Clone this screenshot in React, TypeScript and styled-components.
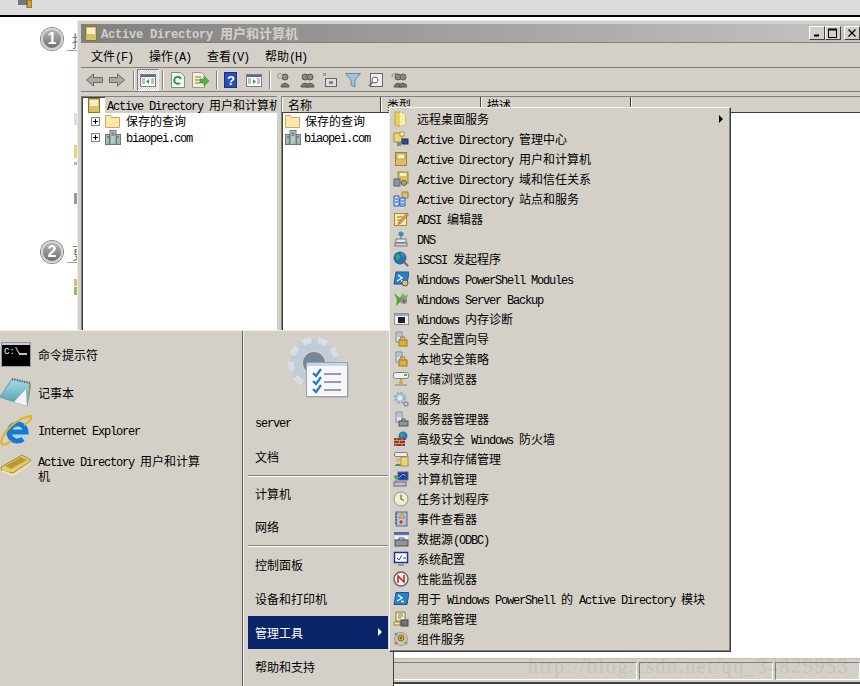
import React from 'react'
import type { FC, ReactNode } from 'react'
import styled, { createGlobalStyle } from 'styled-components'

const GlobalStyle = createGlobalStyle`
  html, body { margin: 0; padding: 0; background: #fff; }
  body { font-family: "Noto Sans CJK SC", "Liberation Sans", sans-serif; font-size: 12px; color: #000; }
`

const Latin = styled.span<{ $bold?: boolean }>`
  font-family: "Liberation Mono", monospace;
  font-size: 12px;
  line-height: 1;
  letter-spacing: ${({ $bold }) => ($bold ? '-0.2px' : '-1.2px')};
`

// SimSun runs its latin at half the CJK width, so split the runs and style them apart
const Txt: FC<{ s: string; bold?: boolean }> = ({ s, bold }) => (
  <>
    {s.split(/([\x00-\x7f]+)/).filter(Boolean).map((run, i) =>
      /^[\x00-\x7f]/.test(run) ? <Latin key={i} $bold={bold}>{run}</Latin> : <span key={i}>{run}</span>
    )}
  </>
)

const Svg: FC<{ w?: number; h?: number; vb?: string; children: ReactNode }> = ({ w = 16, h = 16, vb, children }) => (
  <svg width={w} height={h} viewBox={vb ?? `0 0 ${w} ${h}`} style={{ display: 'block', flexShrink: 0 }}>
    {children}
  </svg>
)

const ServerLock = (
  <Svg>
    <path d="M3 1h6v10H3z" fill="#dfe3e8" stroke="#7d8792" />
    <path d="M4 3h4M4 5h4" stroke="#8e99a5" />
    <path d="M7 9.500V8a2.500 2.500 0 015 0v1.500" fill="none" stroke="#9a7a20" />
    <rect x="6" y="9" width="8" height="6" fill="#e0b030" stroke="#9a7a20" />
  </Svg>
)

const BookTan = (
  <>
    <rect x="2.500" y="1.500" width="11" height="13" fill="#d8bf68" stroke="#9c8432" />
    <rect x="4" y="3" width="8" height="5" fill="#f6efc8" stroke="#b9a24e" />
  </>
)

const menuIcons: Record<string, ReactNode> = {
  remote: (
    <Svg>
      <path d="M2 1h5l5 2v11l-5 1H2z" fill="#eccf63" stroke="#c4a93f" />
      <path d="M7 1l5 2v11l-5 1z" fill="#f7eda8" />
    </Svg>
  ),
  adCenter: (
    <Svg>
      <path d="M1 2h8v9H1z" fill="#ecd67c" stroke="#a89040" />
      <path d="M7 1h4v4H7z" fill="#fff5c0" stroke="#a89040" />
      <rect x="9" y="8" width="6" height="5" fill="#1c4fb0" stroke="#333" />
      <rect x="4" y="11" width="4" height="4" fill="#7f8a96" />
    </Svg>
  ),
  adUsers: <Svg>{BookTan}</Svg>,
  adDomains: (
    <Svg>
      <rect x="5" y="1" width="10" height="11" fill="#d8bf68" stroke="#9c8432" />
      <rect x="7" y="2" width="6" height="3" fill="#f6efc8" />
      <rect x="1" y="8" width="6" height="7" fill="#8a97a6" stroke="#566" />
      <circle cx="11" cy="12" r="2.500" fill="#e0a020" stroke="#2a62b0" />
    </Svg>
  ),
  adSites: (
    <Svg>
      <rect x="9" y="1" width="6" height="6" fill="#d8bf68" stroke="#9c8432" />
      <path d="M1 5h5v10H1zM7 7h5v8H7z" fill="#cfe0f5" stroke="#1f5fc0" />
      <path d="M2 8h3M2 11h3M8 10h3M8 13h3" stroke="#1f5fc0" />
    </Svg>
  ),
  adsi: (
    <Svg>
      <rect x="1.500" y="2.500" width="12" height="12" fill="#f6e9b0" stroke="#a58a30" />
      <path d="M4 6h6M4 9h4" stroke="#8a7a40" />
      <path d="M6 11l8-9 1.500 1.500-8 9-2.500 1z" fill="#e8a040" stroke="#844" strokeWidth=".6" />
    </Svg>
  ),
  dns: (
    <Svg>
      <circle cx="8" cy="3" r="2.500" fill="#3a8bd0" />
      <path d="M8 5v5" stroke="#778" />
      <rect x="3" y="8" width="10" height="3.500" fill="#e8e8e8" stroke="#778" />
      <rect x="2" y="12" width="12" height="3" fill="#d0d0d0" stroke="#778" />
    </Svg>
  ),
  iscsi: (
    <Svg>
      <circle cx="7" cy="7" r="6.500" fill="#1f70b8" />
      <path d="M3 4c2-2 4 0 4 2s-3 2-3 4zM8 2c3 0 4 3 3 4s-2-2-3-4z" fill="#52a84a" />
      <path d="M10 10l5 5" stroke="#667" strokeWidth="2" />
    </Svg>
  ),
  psModules: (
    <Svg>
      <path d="M3 1h13l-2 12H1z" fill="#2a7fc8" stroke="#1a5690" />
      <path d="M5 4l4 3-5 3M8 10h3" fill="none" stroke="#fff" strokeWidth="1.300" />
      <circle cx="12" cy="12" r="3" fill="#f0c030" stroke="#2a62b0" />
    </Svg>
  ),
  backup: (
    <Svg>
      <path d="M1 2l3 7-1 6 5-5 2-8-3 5z" fill="#47a83a" />
      <path d="M7 12l3-10 2 3 3-2-2 8z" fill="#6fbe4f" />
      <circle cx="11" cy="10" r="3" fill="#8f8790" />
      <circle cx="11" cy="10" r="1" fill="#c24" />
    </Svg>
  ),
  memory: (
    <Svg>
      <rect x="1.500" y="2.500" width="14" height="11" fill="#eef0f4" stroke="#8a8f99" />
      <rect x="2" y="3" width="13" height="2" fill="#9aa6bb" />
      <rect x="5" y="6" width="7" height="6" fill="#222" />
    </Svg>
  ),
  lockA: ServerLock,
  lockB: ServerLock,
  storage: (
    <Svg>
      <rect x=".5" y="1.500" width="15" height="6" rx="2" fill="#f0f0ee" stroke="#7c8288" />
      <rect x="11" y="3" width="3" height="2" fill="#4caa38" />
      <path d="M8 8v5M2 14h12" stroke="#7c8288" />
      <rect x="6" y="10" width="4" height="3" fill="#d8b030" />
    </Svg>
  ),
  services: (
    <Svg>
      <circle cx="7" cy="7" r="4.500" fill="none" stroke="#8fb0d0" strokeWidth="3" strokeDasharray="2.500 1" />
      <circle cx="7" cy="7" r="2" fill="#e8eef5" />
      <circle cx="13" cy="13" r="2" fill="none" stroke="#8b9198" strokeWidth="1.500" />
    </Svg>
  ),
  serverManager: (
    <Svg>
      <path d="M3 1h6v10H3z" fill="#dfe3e8" stroke="#7d8792" />
      <path d="M4 3h4M4 5h4" stroke="#8e99a5" />
      <rect x="6" y="10" width="9" height="5" fill="#8d949c" stroke="#555" />
      <path d="M9 10V8h3v2" fill="none" stroke="#555" />
    </Svg>
  ),
  firewall: (
    <Svg>
      <circle cx="10" cy="5" r="4.500" fill="#2a78c8" />
      <path d="M8 2c2 0 3 2 2 3l-3 1z" fill="#52a84a" />
      <rect x="1" y="7" width="11" height="8" fill="#8c3a22" />
      <path d="M1 9.500h11M1 12.500h11M4 7v2.500M9 7v2.500M6.500 9.500v3M3 12.500V15M9 12.500V15" stroke="#d8b8a0" strokeWidth=".7" />
    </Svg>
  ),
  shares: (
    <Svg>
      <rect x="1.500" y="1.500" width="13" height="4" rx="1.500" fill="#eee" stroke="#7c8288" />
      <rect x="8" y="6" width="7" height="9" fill="#ecd67c" stroke="#a89040" />
      <circle cx="5" cy="9" r="2" fill="#e8b070" />
      <path d="M2 15c0-3 6-3 6 0z" fill="#3f9a48" />
    </Svg>
  ),
  computer: (
    <Svg>
      <rect x="5" y="1" width="10" height="8" fill="#1a3fb0" stroke="#667" />
      <path d="M6 7l4-4 3 2" stroke="#7fb8ff" fill="none" />
      <rect x="1" y="11" width="12" height="4" fill="#bdc3c9" stroke="#667" />
      <circle cx="3" cy="6" r="2" fill="#4caa38" />
      <path d="M3 8v3" stroke="#667" />
    </Svg>
  ),
  clock: (
    <Svg>
      <circle cx="8" cy="8" r="7" fill="#f4ecd0" stroke="#8a8f99" />
      <path d="M8 3.500V8l3 1.500" fill="none" stroke="#666" strokeWidth="1.200" />
    </Svg>
  ),
  events: (
    <Svg>
      <rect x="3" y="1" width="11" height="14" fill="#a9bfdc" stroke="#55688a" />
      <path d="M2 3h2M2 6h2M2 9h2M2 12h2" stroke="#445" />
      <path d="M9 2l3 5H6z" fill="#f0c020" stroke="#8a6a10" strokeWidth=".5" />
      <circle cx="8" cy="11" r="2.200" fill="#d03030" stroke="#fff" strokeWidth=".6" />
    </Svg>
  ),
  odbc: (
    <Svg>
      <rect x="1" y="1" width="15" height="3" fill="#4a6ea8" />
      <rect x="1" y="4" width="15" height="5" fill="#f0f0f0" stroke="#99a" strokeWidth=".5" />
      <rect x="2" y="9" width="13" height="6" fill="#8d949c" stroke="#555" />
      <path d="M6 9V7h5v2" fill="none" stroke="#555" />
    </Svg>
  ),
  msconfig: (
    <Svg>
      <rect x="1.500" y="1.500" width="13" height="10" fill="#fff" stroke="#1c2fb0" strokeWidth="1.500" />
      <path d="M4 7l2 2 3-5" fill="none" stroke="#1c4fc0" />
      <path d="M10 7h3" stroke="#444" />
      <path d="M5 14h6" stroke="#9a9a9a" strokeWidth="2" />
    </Svg>
  ),
  perf: (
    <Svg>
      <circle cx="8" cy="8" r="7" fill="#f5f1e6" stroke="#5f6368" strokeWidth="1.400" />
      <path d="M5 12V5l6 6V4" fill="none" stroke="#c02020" strokeWidth="1.500" />
    </Svg>
  ),
  ps: (
    <Svg>
      <path d="M3 1.500h13l-2 12H1z" fill="#2a7fc8" stroke="#1a5690" />
      <path d="M5 4l4 3-5 3M8 10.500h3" fill="none" stroke="#fff" strokeWidth="1.300" />
    </Svg>
  ),
  gpo: (
    <Svg>
      <path d="M3 1h9v9H3z" fill="#f6efc8" stroke="#8a7a40" />
      <path d="M5 3h5M5 5h5M5 7h3" stroke="#8a7a40" />
      <path d="M1 11h6v3H1z" fill="#f0e4a8" stroke="#a58a30" />
      <rect x="8" y="9" width="7" height="6" fill="#6f767e" stroke="#444" />
    </Svg>
  ),
  components: (
    <Svg>
      <circle cx="8" cy="8" r="6.500" fill="#c9c6bd" stroke="#9a9a9a" />
      <circle cx="8" cy="7" r="3" fill="#e8c020" stroke="#8a6a10" />
      <path d="M8 5.500v3M6.500 7h3" stroke="#553" />
      <circle cx="3" cy="3" r="1.500" fill="#6a8ad0" />
      <circle cx="3" cy="12" r="1.500" fill="#d06060" />
      <circle cx="13" cy="12" r="1.500" fill="#6ab060" />
    </Svg>
  ),
}

const adminItems: { icon: string; label: string; arrow?: boolean }[] = [
  { icon: 'remote', label: '远程桌面服务', arrow: true },
  { icon: 'adCenter', label: 'Active Directory 管理中心' },
  { icon: 'adUsers', label: 'Active Directory 用户和计算机' },
  { icon: 'adDomains', label: 'Active Directory 域和信任关系' },
  { icon: 'adSites', label: 'Active Directory 站点和服务' },
  { icon: 'adsi', label: 'ADSI 编辑器' },
  { icon: 'dns', label: 'DNS' },
  { icon: 'iscsi', label: 'iSCSI 发起程序' },
  { icon: 'psModules', label: 'Windows PowerShell Modules' },
  { icon: 'backup', label: 'Windows Server Backup' },
  { icon: 'memory', label: 'Windows 内存诊断' },
  { icon: 'lockA', label: '安全配置向导' },
  { icon: 'lockB', label: '本地安全策略' },
  { icon: 'storage', label: '存储浏览器' },
  { icon: 'services', label: '服务' },
  { icon: 'serverManager', label: '服务器管理器' },
  { icon: 'firewall', label: '高级安全 Windows 防火墙' },
  { icon: 'shares', label: '共享和存储管理' },
  { icon: 'computer', label: '计算机管理' },
  { icon: 'clock', label: '任务计划程序' },
  { icon: 'events', label: '事件查看器' },
  { icon: 'odbc', label: '数据源(ODBC)' },
  { icon: 'msconfig', label: '系统配置' },
  { icon: 'perf', label: '性能监视器' },
  { icon: 'ps', label: '用于 Windows PowerShell 的 Active Directory 模块' },
  { icon: 'gpo', label: '组策略管理' },
  { icon: 'components', label: '组件服务' },
]

const Page = styled.div`
  position: relative;
  width: 860px;
  height: 686px;
  overflow: hidden;
  background: #fff;
`

const TopBar = styled.div`
  height: 15px;
  background: #dcdcdc;
  border-bottom: 2px solid #000;
  padding-left: 18px;
  overflow: hidden;
`

const Badge = styled.div<{ $x: number; $y: number }>`
  position: absolute;
  left: ${({ $x }) => $x}px;
  top: ${({ $y }) => $y}px;
  width: 22px;
  height: 22px;
  box-sizing: border-box;
  border-radius: 50%;
  background: linear-gradient(#b4b4b4, #6e6e6e);
  border: 2px solid #d0d0d0;
  box-shadow: 0 0 0 1px #8a8a8a;
  color: #fff;
  font: bold 16px/18px "Liberation Sans", sans-serif;
  text-align: center;
`

const GuideFragment = styled.div<{ $y: number }>`
  position: absolute;
  left: 67px;
  top: ${({ $y }) => $y}px;
  width: 11px;
  height: 20px;
  box-sizing: content-box;
  border-bottom: 1px solid #a0a0a0;
  overflow: hidden;
  padding-left: 5px;
  color: #777;
  font-size: 16px;
  line-height: 20px;
`

const Sliver = styled.div<{ $y: number; $h: number; $c: string }>`
  position: absolute;
  left: 74px;
  top: ${({ $y }) => $y}px;
  width: 4px;
  height: ${({ $h }) => $h}px;
  background: ${({ $c }) => $c};
`

const Window = styled.div`
  position: absolute;
  left: 77px;
  top: 20px;
  width: 783px;
  height: 664px;
  display: flex;
  flex-direction: column;
  box-sizing: border-box;
  padding: 3px 0 0 3px;
  background: #d4d0c8;
  border-top: 1px solid #efece6;
  border-left: 1px solid #efece6;
  border-bottom: 2px solid #404040;
`

const TitleBar = styled.div`
  height: 18px;
  flex: none;
  display: flex;
  align-items: center;
  gap: 4px;
  padding: 0 0 0 4px;
  background: linear-gradient(90deg, #808080, #c4c4c4);
  color: #d4d0c8;
  font-size: 13px;
  font-weight: 700;
  line-height: 18px;
  border-bottom: 1px solid #808080;
`

const TitleText = styled.div`
  flex: 1;
  white-space: nowrap;
`

const CaptionButtons = styled.div`
  display: flex;
`

const CaptionButton = styled.div<{ $gap?: boolean }>`
  width: 14px;
  height: 12px;
  margin-left: ${({ $gap }) => ($gap ? 3 : 0)}px;
  display: flex;
  align-items: center;
  justify-content: center;
  background: #d4d0c8;
  border: 1px solid;
  border-color: #fff #404040 #404040 #fff;
`

const MenuBar = styled.div`
  height: 22px;
  flex: none;
  display: flex;
  align-items: center;
  gap: 16px;
  padding: 2px 0 0 10px;
  line-height: 16px;
  border-bottom: 1px solid #808080;
`

const Toolbar = styled.div`
  height: 22px;
  flex: none;
  display: flex;
  align-items: center;
  padding-left: 5px;
  margin-top: 1px;
  border-bottom: 1px solid #808080;
`

const ToolButton = styled.div<{ $ml: number }>`
  margin-left: ${({ $ml }) => $ml}px;
`

const ToolSep = styled.div<{ $ml: number }>`
  width: 1px;
  height: 18px;
  margin-left: ${({ $ml }) => $ml}px;
  background: #808080;
  box-shadow: 1px 0 0 #fff;
`

const ToolActive = styled.div`
  width: 20px;
  height: 20px;
  margin-left: 3px;
  display: flex;
  align-items: center;
  justify-content: center;
  border: 1px solid;
  border-color: #808080 #fff #fff #808080;
  background: repeating-conic-gradient(#fff 0 25%, #d4d0c8 0 50%) 0 0 / 2px 2px;
`

const Panes = styled.div`
  flex: 1;
  min-height: 0;
  display: flex;
  margin-top: 4px;
  gap: 4px;
`

const TreePane = styled.div`
  width: 194px;
  flex: none;
  background: #fff;
  border-left: 1px solid #808080;
  border-top: 1px solid #808080;
  box-shadow: inset 1px 1px 0 #404040;
  overflow: hidden;
  padding-left: 1px;
`

const TreeRoot = styled.div`
  display: flex;
  height: 16px;
  align-items: center;
  white-space: nowrap;
  line-height: 16px;
  padding-left: 5px;
  gap: 5px;
`

const TreeRootLabel = styled.span`
  background: #d4d0c8;
  flex: 1;
  height: 16px;
  padding-left: 2px;
  overflow: hidden;
`

const TreeRow = styled.div`
  display: flex;
  align-items: center;
  height: 16px;
  gap: 5px;
  padding-left: 8px;
  white-space: nowrap;
  line-height: 16px;
`

const Expander = styled.div`
  width: 7px;
  height: 7px;
  flex: none;
  border: 1px solid #808080;
  position: relative;
  &::before { content: ""; position: absolute; left: 1px; right: 1px; top: 3px; height: 1px; background: #000; }
  &::after { content: ""; position: absolute; top: 1px; bottom: 1px; left: 3px; width: 1px; background: #000; }
`

const ListPane = styled.div`
  flex: 1;
  min-width: 0;
  display: flex;
  flex-direction: column;
  background: #fff;
  border-left: 1px solid #808080;
  border-top: 1px solid #808080;
  box-shadow: inset 1px 1px 0 #404040;
`

const ListHeader = styled.div`
  display: flex;
  height: 16px;
  flex: none;
  box-sizing: border-box;
  background: #d4d0c8;
  border-bottom: 1px solid #404040;
`

const HeaderCell = styled.div<{ $w?: number }>`
  width: ${({ $w }) => ($w ? `${$w}px` : 'auto')};
  flex: ${({ $w }) => ($w ? 'none' : '1')};
  box-sizing: border-box;
  padding-left: 5px;
  line-height: 16px;
  border-right: ${({ $w }) => ($w ? '1px solid #404040' : '0')};
  border-left: 1px solid #fff;
  height: 15px;
  overflow: hidden;
`

const ListBody = styled.div`
  flex: 1;
`

const ListRow = styled.div`
  display: flex;
  align-items: center;
  height: 16px;
  padding-left: 3px;
  gap: 2px;
  line-height: 16px;
  white-space: nowrap;
`

const StatusBar = styled.div`
  height: 24px;
  flex: none;
  box-sizing: border-box;
  display: flex;
  gap: 2px;
  padding: 3px 0 2px 0;
  border-top: 1px solid #c4c0b8;
  background: #d4d0c8;
`

const StatusCell = styled.div<{ $w?: number }>`
  width: ${({ $w }) => ($w ? `${$w}px` : 'auto')};
  flex: ${({ $w }) => ($w ? 'none' : '1')};
  border: 1px solid;
  border-color: #808080 #fff #fff #808080;
`

const Watermark = styled.div`
  position: absolute;
  left: 528px;
  top: 656px;
  font: 20px/20px "Liberation Serif", serif;
  letter-spacing: 1.6px;
  color: rgba(120, 120, 120, 0.17);
  white-space: nowrap;
`

const StartMenu = styled.div`
  position: absolute;
  left: 0;
  top: 330px;
  width: 394px;
  height: 356px;
  box-sizing: border-box;
  display: flex;
  background: #d4d0c8;
  border-top: 1px solid #efece6;
  border-right: 1px solid #404040;
`

const Programs = styled.div`
  width: 243px;
  flex: none;
  box-sizing: border-box;
  padding-top: 4px;
  border-right: 1px solid #606060;
`

const ProgramRow = styled.div`
  display: flex;
  align-items: center;
  height: 38px;
  gap: 7px;
`

const ProgramIcon = styled.div<{ $lift?: number }>`
  width: 31px;
  flex: none;
  display: flex;
  justify-content: center;
  padding-bottom: ${({ $lift }) => $lift ?? 0}px;
`

const ProgramLabel = styled.div`
  width: 166px;
  line-height: 13px;
`

const Places = styled.div`
  flex: 1;
  min-width: 0;
  display: flex;
  flex-direction: column;
  padding-left: 4px;
  border-left: 1px solid #f0eee8;
`

const GearBox = styled.div`
  height: 76px;
  flex: none;
  padding: 3px 0 0 40px;
  box-sizing: border-box;
`

const Place = styled.div<{ $active?: boolean }>`
  height: 33px;
  flex: none;
  width: 140px;
  box-sizing: border-box;
  position: relative;
  display: flex;
  align-items: center;
  padding-left: 7px;
  line-height: 16px;
  background: ${({ $active }) => ($active ? '#0a246a' : 'transparent')};
  color: ${({ $active }) => ($active ? '#fff' : '#000')};
`

const PlaceArrow = styled.span`
  position: absolute;
  right: 6px;
  top: 12px;
  border-left: 4px solid #fff;
  border-top: 4px solid transparent;
  border-bottom: 4px solid transparent;
`

const PlaceRule = styled.div<{ $h?: number; $blank?: boolean }>`
  height: ${({ $h }) => $h ?? 5}px;
  width: 140px;
  flex: none;
  display: flex;
  align-items: center;
  &::after {
    content: "";
    flex: 1;
    height: 1px;
    background: ${({ $blank }) => ($blank ? 'transparent' : '#808080')};
    box-shadow: ${({ $blank }) => ($blank ? 'none' : '0 1px 0 #fff')};
  }
`

const Flyout = styled.div`
  position: absolute;
  left: 389px;
  top: 107px;
  width: 342px;
  height: 545px;
  box-sizing: border-box;
  padding: 1px 0 0 0;
  background: #d4d0c8;
  border: 1px solid;
  border-color: #f4f2ec #404040 #404040 #f4f2ec;
  box-shadow: inset -1px -1px 0 #808080;
`

const FlyoutRow = styled.div`
  display: flex;
  align-items: center;
  height: 20px;
  padding-left: 3px;
  gap: 8px;
  line-height: 16px;
  white-space: nowrap;
  position: relative;
`

const FlyoutArrow = styled.span`
  position: absolute;
  right: 7px;
  top: 6px;
  border-left: 4px solid #000;
  border-top: 4px solid transparent;
  border-bottom: 4px solid transparent;
`

const SavedFolder = (
  <Svg w={15} h={14}>
    <path d="M.5 3.500V1.500h5l1 2h8v10H.5z" fill="#fbe8a8" stroke="#c8aa58" />
  </Svg>
)

const Domain = (
  <Svg w={16} h={15}>
    <rect x="5" y=".5" width="6" height="14" fill="#bcc7c6" stroke="#6a7a7a" />
    <rect x=".5" y="4.500" width="4" height="10" fill="#aab8b8" stroke="#6a7a7a" />
    <rect x="11.500" y="4.500" width="4" height="10" fill="#aab8b8" stroke="#6a7a7a" />
    <path d="M6.500 3h3M6.500 5h3M2 7h2M12 7h2" stroke="#556" />
    <path d="M3 13h1M8 13h1M13 13h1" stroke="#4fd04f" strokeWidth="1.500" />
  </Svg>
)

const ArrowLeft = (
  <Svg w={17} h={14}>
    <path d="M.5 7l7-6v3.500h9v5h-9V13z" fill="#a8a8a8" stroke="#6a6a6a" />
  </Svg>
)
const ArrowRight = (
  <Svg w={16} h={14}>
    <path d="M15.500 7l-7-6v3.500h-8v5h8V13z" fill="#a8a8a8" stroke="#6a6a6a" />
  </Svg>
)
const PaneIcon: FC<{ arrow: string; flip?: boolean }> = ({ arrow, flip }) => (
  <Svg w={16} h={13}>
    <rect x=".5" y=".5" width="15" height="12" fill="#fff" stroke="#7a8088" />
    <rect x="1" y="1" width="14" height="2" fill="#5a6a80" />
    <path d="M2 5h3M2 7h3M2 9h3M11 5h3M11 7h3M11 9h3" stroke="#7a8088" />
    <path d={flip ? 'M7 5v5l3-2.500z' : 'M9 5v5L6 7.500z'} fill={arrow} />
  </Svg>
)
const Person: FC<{ x?: number }> = ({ x = 0 }) => (
  <g transform={`translate(${x} 0)`}>
    <circle cx="6" cy="5" r="3" fill="#8a8a8a" stroke="#555" />
    <path d="M2 15c0-5 8-5 8 0z" fill="#777" stroke="#555" />
  </g>
)

const AdTitleIcon = (
  <Svg w={12} h={15}>
    <rect x=".5" y=".5" width="11" height="14" fill="#d8bf68" stroke="#8e7828" />
    <rect x="2" y="2" width="8" height="6" fill="#f6efc8" />
  </Svg>
)

const CmdIcon = (
  <Svg w={30} h={25}>
    <rect x=".5" y=".5" width="29" height="24" fill="#000" stroke="#999" />
    <rect x="1" y="1" width="28" height="2" fill="#c8ccd4" />
    <text x="3" y="12" fill="#fff" fontFamily="Liberation Mono" fontSize="9">C:\</text>
    <path d="M18 12h8" stroke="#fff" strokeWidth="1.500" />
  </Svg>
)

const NotepadIcon = (
  <Svg w={31} h={30}>
    <defs>
      <linearGradient id="notepadPage" x1="0" y1="0" x2="0" y2="1">
        <stop offset="0" stopColor="#a8dce2" />
        <stop offset="1" stopColor="#4a9db4" />
      </linearGradient>
    </defs>
    <path d="M12 2l18 4-3 23L0 20z" fill="url(#notepadPage)" stroke="#6d98a4" />
    <path d="M30 6l1 3-3 20z" fill="#a88a48" />
    <path d="M12 2l18 4" stroke="#667" strokeDasharray="1 1.500" strokeWidth="2.500" />
    <path d="M14 25l12-13 1 17z" fill="#f0f4f5" />
  </Svg>
)

const IeIcon = (
  <Svg w={32} h={31}>
    <circle cx="17" cy="16" r="11" fill="#a8d8f4" />
    <path d="M9 17h17A8.500 8.500 0 1023 24" fill="none" stroke="#1878d0" strokeWidth="5" />
    <path d="M1 28C3 15 18 3 31 1c1 3-3 7-7 9" fill="none" stroke="#e8b020" strokeWidth="2.200" />
    <path d="M1 28c1 3 7 1 10-2" fill="none" stroke="#e8b020" strokeWidth="2" />
  </Svg>
)

const AdBookIcon = (
  <Svg w={32} h={22}>
    <path d="M1 13L22 1l9 5-3 3-15 10L2 17z" fill="#e0cc70" stroke="#a08c38" />
    <path d="M5 12L21 3l6 3-16 9z" fill="#b89a30" />
    <path d="M2 16l11 4 17-11v2L13 22 2 18z" fill="#f2e7a8" />
  </Svg>
)

const GearIcon = (
  <Svg w={62} h={65}>
    <circle cx="26" cy="29" r="18" fill="none" stroke="#c2ccd8" strokeWidth="11" />
    <circle cx="26" cy="29" r="23" fill="none" stroke="#d8dee6" strokeWidth="6" strokeDasharray="9 7" />
    <circle cx="26" cy="29" r="11" fill="#77889c" />
    <rect x="19.500" y="29.500" width="41" height="34" fill="#9aa2ad" />
    <rect x="18.500" y="28.500" width="41" height="34" fill="#f6f7fa" stroke="#9aa2ad" />
    <rect x="19" y="29" width="40" height="3" fill="#c7d4e6" />
    <path d="M25 39l3 3 5-7M25 47l3 3 5-7M25 55l3 3 5-7" fill="none" stroke="#2a78c8" strokeWidth="2.200" />
    <path d="M36 40h17M36 48h17M36 56h17" stroke="#9a98ae" strokeWidth="2" />
  </Svg>
)

export default function App() {
  return (
    <Page>
      <GlobalStyle />
      <TopBar>
        <Svg w={14} h={8}>
          <rect x="0" y="-2" width="9" height="7" fill="#6e7880" />
          <rect x="9" y="0" width="5" height="8" fill="#d8a030" stroke="#7a5a10" />
        </Svg>
      </TopBar>

      <Badge $x={41} $y={28}>1</Badge>
      <GuideFragment $y={30}>描</GuideFragment>
      <Badge $x={41} $y={241}>2</Badge>
      <GuideFragment $y={242}>更</GuideFragment>
      <Sliver $y={113} $h={12} $c="#cfe0ee" />
      <Sliver $y={145} $h={13} $c="#f0d080" />
      <Sliver $y={162} $h={3} $c="#9cc0c0" />
      <Sliver $y={193} $h={11} $c="#9a9a9a" />
      <Sliver $y={279} $h={7} $c="#d8c060" />
      <Sliver $y={287} $h={8} $c="#8cc070" />

      <Window>
        <TitleBar>
          {AdTitleIcon}
          <TitleText><Txt s="Active Directory 用户和计算机" bold /></TitleText>
          <CaptionButtons>
            <CaptionButton>
              <Svg w={8} h={8}><path d="M1 6.500h5" stroke="#000" strokeWidth="2" /></Svg>
            </CaptionButton>
            <CaptionButton>
              <Svg w={10} h={10}><path d="M.5 1.500h8v8h-8z" fill="none" stroke="#000" /><path d="M0 1.500h9" stroke="#000" strokeWidth="2" /></Svg>
            </CaptionButton>
            <CaptionButton $gap>
              <Svg w={8} h={8}><path d="M.5.500l7 7M7.500.500l-7 7" stroke="#000" strokeWidth="1.300" /></Svg>
            </CaptionButton>
          </CaptionButtons>
        </TitleBar>
        <MenuBar>
          <span><Txt s="文件(F)" /></span>
          <span><Txt s="操作(A)" /></span>
          <span><Txt s="查看(V)" /></span>
          <span><Txt s="帮助(H)" /></span>
        </MenuBar>
        <Toolbar>
          <ToolButton $ml={0}>{ArrowLeft}</ToolButton>
          <ToolButton $ml={6}>{ArrowRight}</ToolButton>
          <ToolSep $ml={8} />
          <ToolActive><PaneIcon arrow="#3aa03a" /></ToolActive>
          <ToolSep $ml={3} />
          <ToolButton $ml={8}>
            <Svg w={14} h={16}>
              <path d="M.5.500h9l4 4v11H.500z" fill="#f6f6f6" stroke="#888" />
              <path d="M10 7a3.500 3.500 0 10-1 4" fill="none" stroke="#2f9a3a" strokeWidth="2" />
            </Svg>
          </ToolButton>
          <ToolButton $ml={7}>
            <Svg w={17} h={16}>
              <path d="M.5.500h9l3 3v12H.500z" fill="#f8f0c8" stroke="#999" />
              <path d="M3 5h6M3 8h5M3 11h5" stroke="#777" />
              <path d="M8 7h4V4l5 5-5 5v-3H8z" fill="#4cb04c" stroke="#2a7a2a" strokeWidth=".5" />
            </Svg>
          </ToolButton>
          <ToolSep $ml={7} />
          <ToolButton $ml={7}>
            <Svg w={13} h={16}>
              <rect x=".5" y=".5" width="12" height="15" fill="#2a4fb8" stroke="#1a2f80" />
              <text x="3" y="13" fill="#fff" fontFamily="Liberation Sans" fontWeight="700" fontSize="13">?</text>
            </Svg>
          </ToolButton>
          <ToolButton $ml={9}><PaneIcon arrow="#3aa03a" flip /></ToolButton>
          <ToolSep $ml={7} />
          <ToolButton $ml={6}><Svg><Person x={3} /><circle cx="4" cy="4" r="2.500" fill="#ccc" stroke="#666" strokeDasharray="1 1" /></Svg></ToolButton>
          <ToolButton $ml={7}><Svg><Person /><Person x={5} /></Svg></ToolButton>
          <ToolButton $ml={7}>
            <Svg>
              <rect x="3.500" y="6.500" width="11" height="8" fill="#ddd" stroke="#666" />
              <path d="M1 4l3-3M3 1v3M1 1l3 3" stroke="#888" />
              <rect x="7" y="9" width="4" height="3" fill="#888" />
            </Svg>
          </ToolButton>
          <ToolButton $ml={7}>
            <Svg><path d="M.5 1.500h15L10 8v7l-4-2V8z" fill="#9ec4e2" stroke="#668a9e" /></Svg>
          </ToolButton>
          <ToolButton $ml={7}>
            <Svg w={15} h={16}>
              <rect x="2.500" y="1.500" width="12" height="13" fill="#eee" stroke="#666" />
              <circle cx="7" cy="8" r="3" fill="#fff" stroke="#666" />
              <path d="M5 10l-4 4" stroke="#666" strokeWidth="1.500" />
            </Svg>
          </ToolButton>
          <ToolButton $ml={8}>
            <Svg>
              <path d="M1 5c0-3 3-4 5-3" fill="none" stroke="#777" />
              <Person x={1} /><Person x={6} />
            </Svg>
          </ToolButton>
        </Toolbar>
        <Panes>
          <TreePane>
            <TreeRoot>
              {AdTitleIcon}
              <TreeRootLabel><Txt s="Active Directory 用户和计算机" /></TreeRootLabel>
            </TreeRoot>
            <TreeRow>
              <Expander />
              {SavedFolder}
              <span style={{ marginLeft: 1 }}><Txt s="保存的查询" /></span>
            </TreeRow>
            <TreeRow>
              <Expander />
              {Domain}
              <span><Txt s="biaopei.com" /></span>
            </TreeRow>
          </TreePane>
          <ListPane>
            <ListHeader>
              <HeaderCell $w={99}><Txt s="名称" /></HeaderCell>
              <HeaderCell $w={100}><Txt s="类型" /></HeaderCell>
              <HeaderCell $w={150}><Txt s="描述" /></HeaderCell>
              <HeaderCell />
            </ListHeader>
            <ListBody>
              <ListRow>{SavedFolder}<span style={{ marginLeft: 3 }}><Txt s="保存的查询" /></span></ListRow>
              <ListRow>{Domain}<span style={{ marginLeft: 1 }}><Txt s="biaopei.com" /></span></ListRow>
            </ListBody>
          </ListPane>
        </Panes>
        <StatusBar>
          <StatusCell />
          <StatusCell $w={132} />
          <StatusCell $w={83} />
        </StatusBar>
      </Window>

      <Watermark>http://blog.csdn.net/qq_34829953</Watermark>

      <StartMenu>
        <Programs>
          <ProgramRow><ProgramIcon>{CmdIcon}</ProgramIcon><ProgramLabel><Txt s="命令提示符" /></ProgramLabel></ProgramRow>
          <ProgramRow><ProgramIcon>{NotepadIcon}</ProgramIcon><ProgramLabel><Txt s="记事本" /></ProgramLabel></ProgramRow>
          <ProgramRow><ProgramIcon>{IeIcon}</ProgramIcon><ProgramLabel><Txt s="Internet Explorer" /></ProgramLabel></ProgramRow>
          <ProgramRow><ProgramIcon $lift={6}>{AdBookIcon}</ProgramIcon><ProgramLabel><Txt s="Active Directory 用户和计算机" /></ProgramLabel></ProgramRow>
        </Programs>
        <Places>
          <GearBox>{GearIcon}</GearBox>
          <Place><Txt s="server" /></Place>
          <Place><Txt s="文档" /></Place>
          <PlaceRule $h={4} />
          <Place><Txt s="计算机" /></Place>
          <Place><Txt s="网络" /></Place>
          <PlaceRule />
          <Place><Txt s="控制面板" /></Place>
          <PlaceRule $h={1} $blank />
          <Place><Txt s="设备和打印机" /></Place>
          <PlaceRule $h={1} $blank />
          <Place $active><Txt s="管理工具" /><PlaceArrow /></Place>
          <PlaceRule $h={1} $blank />
          <Place><Txt s="帮助和支持" /></Place>
        </Places>
      </StartMenu>

      <Flyout>
        {adminItems.map(item => (
          <FlyoutRow key={item.label}>
            {menuIcons[item.icon]}
            <span><Txt s={item.label} /></span>
            {item.arrow && <FlyoutArrow />}
          </FlyoutRow>
        ))}
      </Flyout>
    </Page>
  )
}
